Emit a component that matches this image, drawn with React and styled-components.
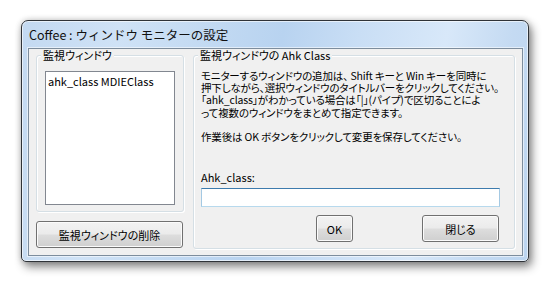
import React from "react";
import styled, { createGlobalStyle } from "styled-components";

const GlobalStyle = createGlobalStyle`
  html, body {
    margin: 0;
    background: #ffffff;
  }
  body {
    font-family: "Noto Sans CJK JP", "Liberation Sans", sans-serif;
    color: #000;
  }
`;

const Page = styled.div`
  padding: 20px 0 0 21px;
  height: 286px;
  box-sizing: border-box;
`;

const Window = styled.div`
  width: 508px;
  height: 242px;
  box-sizing: border-box;
  border: 1px solid #2f3338;
  border-radius: 7px 7px 5px 5px;
  background:
    linear-gradient(100deg,
      #c3d9f1 0%, #cfe2f6 18%, #c6dcf3 30%, #b8d3f0 48%,
      #c9def5 62%, #d8e8f9 78%, #c4daf2 90%, #bcd5f0 100%);
  box-shadow:
    inset 0 0 0 1px rgba(255, 255, 255, 0.6),
    3px 5px 10px rgba(0, 0, 0, 0.45),
    0 0 6px rgba(0, 0, 0, 0.2);
  display: flex;
  flex-direction: column;
  padding: 0 5px 5px 6px;
`;

const TitleBar = styled.div`
  height: 27px;
  display: flex;
  align-items: center;
  padding-left: 1px;
  font-size: 12.5px;
  color: #111;
  white-space: nowrap;
`;

const Client = styled.div`
  flex: 1;
  display: flex;
  gap: 9px;
  padding: 0 7px 6px 7px;
  background: #f0f0f0;
  border: 1px solid #7d8d9d;
  box-shadow: 0 0 0 1px rgba(255, 255, 255, 0.55);
  font-size: 11px;
  font-feature-settings: "palt";
`;

const LeftColumn = styled.div`
  width: 148px;
  display: flex;
  flex-direction: column;
  gap: 9px;
  padding-bottom: 1px;
`;

const Group = styled.fieldset`
  margin: 0;
  padding: 0;
  min-width: 0;
  border: 1px solid #d5dfe5;
  border-radius: 3px;
  box-shadow: inset 1px 1px 0 #ffffff, 1px 1px 0 #ffffff;
  display: flex;
  flex-direction: column;
  flex: ${(p) => (p.$grow ? 1 : "none")};
  width: ${(p) => p.$width || "auto"};
  box-sizing: border-box;
`;

const Legend = styled.legend`
  font-size: 11px;
  line-height: 12px;
  padding: 0 2px;
  margin-left: 4px;
  background: #f0f0f0;
  white-space: nowrap;
`;

const ListBox = styled.div`
  flex: 1;
  margin: 10px 8px 6px 8px;
  background: #ffffff;
  border: 1px solid #828790;
  padding: 3px 2px;
  line-height: 12px;
  white-space: nowrap;
`;

const Button = styled.button`
  height: 27px;
  width: ${(p) => p.$width}px;
  box-sizing: border-box;
  border: 1px solid #707070;
  border-radius: 3px;
  background: linear-gradient(#f2f2f2 0%, #ebebeb 48%, #dddddd 52%, #cfcfcf 100%);
  box-shadow: inset 0 0 0 1px #fbfbfb;
  font-family: inherit;
  font-size: 11px;
  font-feature-settings: "palt";
  color: #000;
  padding: 0;
  cursor: default;
`;

const Instructions = styled.div`
  margin: 9px 0 0 7px;
  font-size: 10.5px;
  letter-spacing: -0.15px;
  line-height: 12.2px;
  white-space: nowrap;
`;

const Line = styled.div`
  height: 12.2px;
`;

const FieldLabel = styled.div`
  margin: auto 0 5px 7px;
  line-height: 12px;
`;

const TextBox = styled.input`
  margin: 0 14px 8px 7px;
  height: 19px;
  box-sizing: border-box;
  border: 1px solid #a4c9e3;
  border-top-color: #3d7bad;
  border-bottom-color: #b7d9ed;
  background: #ffffff;
  outline: none;
  font-family: inherit;
  font-size: 11px;
`;

const ButtonRow = styled.div`
  display: flex;
  justify-content: flex-end;
  gap: 69px;
  padding-right: 15px;
  margin-bottom: 6px;
`;

const instructionLines = [
  "モニターするウィンドウの追加は、 Shift キーと Win キーを同時に",
  "押下しながら、選択ウィンドウのタイトルバーをクリックしてください。",
  "「ahk_class」がわかっている場合は「|」(パイプ)で区切ることによ",
  "って複数のウィンドウをまとめて指定できます。",
  "",
  "作業後は OK ボタンをクリックして変更を保存してください。",
];

export default function App() {
  return (
    <>
      <GlobalStyle />
      <Page>
        <Window>
          <TitleBar>Coffee : ウィンドウ モニターの設定</TitleBar>
          <Client>
            <LeftColumn>
              <Group $grow>
                <Legend>監視ウィンドウ</Legend>
                <ListBox>ahk_class MDIEClass</ListBox>
              </Group>
              <Button $width={147}>監視ウィンドウの削除</Button>
            </LeftColumn>
            <Group $width="322px">
              <Legend>監視ウィンドウの Ahk Class</Legend>
              <Instructions>
                {instructionLines.map((text, i) => (
                  <Line key={i}>{text}</Line>
                ))}
              </Instructions>
              <FieldLabel>Ahk_class:</FieldLabel>
              <TextBox type="text" defaultValue="" />
              <ButtonRow>
                <Button $width={37}>OK</Button>
                <Button $width={77}>閉じる</Button>
              </ButtonRow>
            </Group>
          </Client>
        </Window>
      </Page>
    </>
  );
}
